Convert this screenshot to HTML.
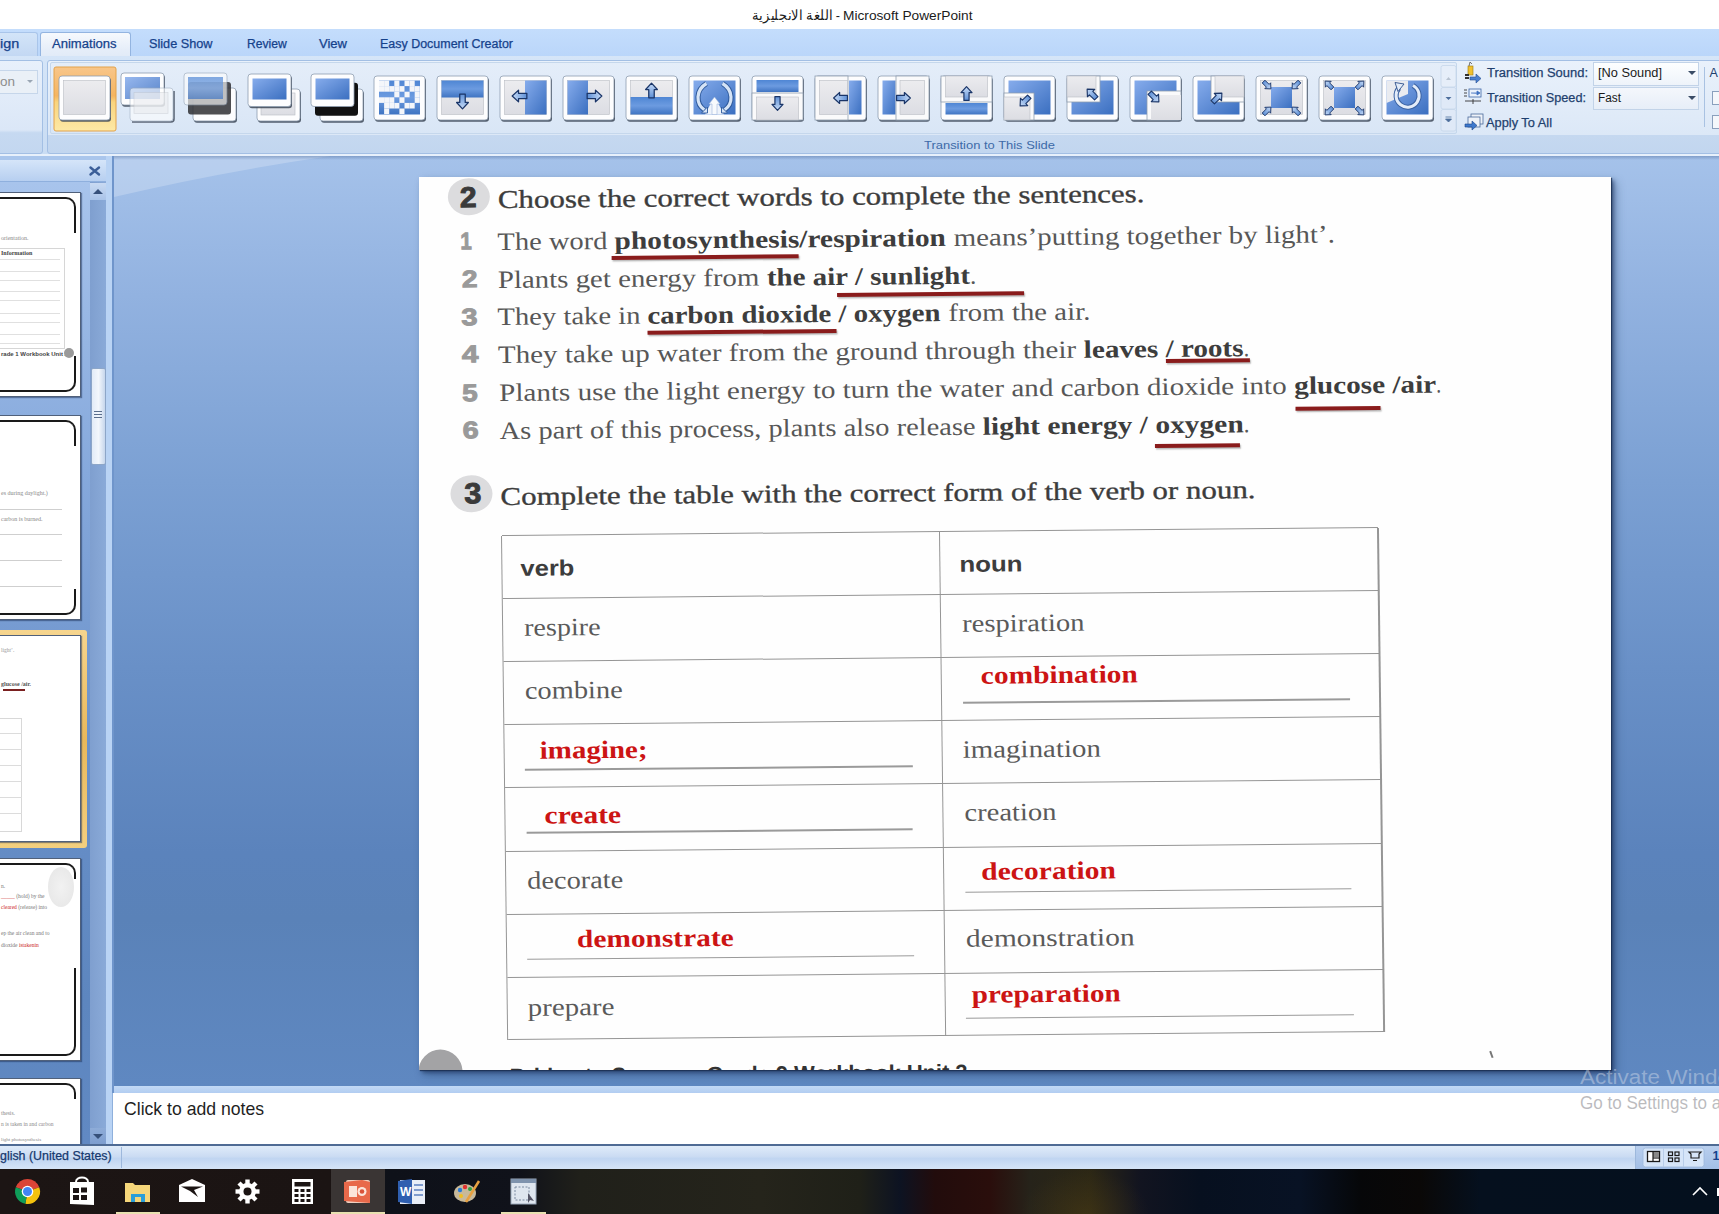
<!DOCTYPE html><html><head><meta charset='utf-8'><style>
*{margin:0;padding:0;box-sizing:border-box}
html,body{width:1719px;height:1214px;overflow:hidden;background:#6f96cc;font-family:"Liberation Sans",sans-serif}
.a{position:absolute}
.t{position:absolute;white-space:pre;line-height:1;transform-origin:0 0}
.b{display:inline-block}
</style></head><body><div class='a' style='left:0;top:0;width:1719px;height:29px;background:#fff'></div><div class='t' style='left:752.0px;top:8.8px;font-family:"Liberation Sans",sans-serif;font-size:13.5px;color:#1b1b1b;font-weight:normal;transform:scaleX(0.9360);'>اللغة الانجليزية -</div><div class='t' style='left:843.3px;top:8.8px;font-family:"Liberation Sans",sans-serif;font-size:13.5px;color:#1b1b1b;font-weight:normal;transform:scaleX(1.0153);'>Microsoft PowerPoint</div><div class='a' style='left:0;top:29px;width:1719px;height:27px;background:linear-gradient(#c4ddfc,#bad6fa)'></div><div class='a' style='left:0;top:55.5px;width:1719px;height:1px;background:#a7c3e8'></div><div class='a' style='left:-10px;top:32px;width:48px;height:24px;border:1px solid #a9c5ea;border-bottom:none;border-radius:3px 3px 0 0;background:linear-gradient(#d3e4f8,#c3d8f3)'></div><div class='t' style='left:0.0px;top:38.3px;font-family:"Liberation Sans",sans-serif;font-size:12.5px;color:#15428b;font-weight:normal;transform:scaleX(1.1506);-webkit-text-stroke:0.25px #15428b'>ign</div><div class='a' style='left:39.5px;top:31.5px;width:91.5px;height:28px;border:1px solid #93b4e0;border-bottom:none;border-radius:3px 3px 0 0;background:linear-gradient(#f6f9fd,#e6eef9 60%,#dfe9f7)'></div><div class='t' style='left:52.4px;top:38.3px;font-family:"Liberation Sans",sans-serif;font-size:12.5px;color:#15428b;font-weight:normal;transform:scaleX(1.0446);-webkit-text-stroke:0.25px #15428b'>Animations</div><div class='t' style='left:149.4px;top:38.3px;font-family:"Liberation Sans",sans-serif;font-size:12.5px;color:#15428b;font-weight:normal;transform:scaleX(1.0152);-webkit-text-stroke:0.25px #15428b'>Slide Show</div><div class='t' style='left:247.1px;top:38.3px;font-family:"Liberation Sans",sans-serif;font-size:12.5px;color:#15428b;font-weight:normal;transform:scaleX(0.9707);-webkit-text-stroke:0.25px #15428b'>Review</div><div class='t' style='left:319.0px;top:38.3px;font-family:"Liberation Sans",sans-serif;font-size:12.5px;color:#15428b;font-weight:normal;transform:scaleX(1.0419);-webkit-text-stroke:0.25px #15428b'>View</div><div class='t' style='left:380.1px;top:38.3px;font-family:"Liberation Sans",sans-serif;font-size:12.5px;color:#15428b;font-weight:normal;transform:scaleX(0.9971);-webkit-text-stroke:0.25px #15428b'>Easy Document Creator</div><div class='a' style='left:0;top:56px;width:1719px;height:100px;background:linear-gradient(#d5e5f8,#c9dcf3)'></div><div class='a' style='left:-10px;top:59.5px;width:52.5px;height:94px;border:1px solid #a3bfe4;border-radius:3px;background:linear-gradient(#e8f0fb,#dbe7f7 75%,#c6d9f1 78%,#c3d7f0)'></div><div class='a' style='left:-5px;top:70px;width:43px;height:24px;border:1px solid #c6d6ea;background:#eaf0f7'></div><div class='t' style='left:0.0px;top:75.9px;font-family:"Liberation Sans",sans-serif;font-size:12.5px;color:#8d8d8d;font-weight:normal;transform:scaleX(1.0787);'>on</div><div class='a' style='left:27px;top:80px;width:0;height:0;border-left:3.5px solid transparent;border-right:3.5px solid transparent;border-top:3.5px solid #9aa6b4'></div><div class='a' style='left:47.4px;top:59.5px;width:1690px;height:94px;border:1px solid #a3bfe4;border-radius:3px;background:linear-gradient(#e9f1fb,#dce8f7 80%,#c5d8f0 80.5%,#c2d6ef)'></div><div class='a' style='left:50px;top:62px;width:1407px;height:72px;border:1px solid #c5d7ec;border-radius:2px;background:linear-gradient(#e4edf9,#d9e6f6)'></div><div class='t' style='left:923.5px;top:139.6px;font-family:"Liberation Sans",sans-serif;font-size:11.5px;color:#3d6aa8;font-weight:normal;transform:scaleX(1.1260);'>Transition to This Slide</div><div class='a' style='left:0;top:153.5px;width:1719px;height:2.5px;background:#e7f0fb'></div><svg class='a' style='left:0;top:0' width='1460' height='140' viewBox='0 0 1460 140'><defs>
<linearGradient id='gblue' x1='0' y1='0' x2='0' y2='1'><stop offset='0' stop-color='#4f86d4'/><stop offset='0.5' stop-color='#6c9be0'/><stop offset='1' stop-color='#3f74c2'/></linearGradient>
<linearGradient id='gblue2' x1='0' y1='0' x2='1' y2='1'><stop offset='0' stop-color='#86acec'/><stop offset='1' stop-color='#3b6fc0'/></linearGradient>
<linearGradient id='ggray' x1='0' y1='0' x2='0' y2='1'><stop offset='0' stop-color='#ececef'/><stop offset='1' stop-color='#dcdde3'/></linearGradient>
<linearGradient id='garr' x1='0' y1='0' x2='0' y2='1'><stop offset='0' stop-color='#c8dcf7'/><stop offset='1' stop-color='#5d8fd6'/></linearGradient>
<linearGradient id='gsel' x1='0' y1='0' x2='0' y2='1'><stop offset='0' stop-color='#f8c68b'/><stop offset='0.45' stop-color='#f5b560'/><stop offset='0.55' stop-color='#f9d47e'/><stop offset='1' stop-color='#fde9a6'/></linearGradient>
</defs><rect x='54' y='67' width='62' height='64' rx='2' fill='url(#gsel)' stroke='#e3a24a' stroke-width='1'/><rect x='60' y='77.8' width='51' height='44' rx='3' fill='#3c4656' opacity='0.85'/><rect x='59' y='76' width='51' height='44' rx='3' fill='#fdfdfe' stroke='#8e9db0' stroke-width='0.8' opacity='1'/><rect x='63.5' y='80.5' width='42' height='34' fill='url(#ggray)' stroke='#b9bcc4' stroke-width='0.6'/><rect x='122' y='74.8' width='43' height='32' rx='3' fill='#3c4656' opacity='0.85'/><rect x='121' y='73' width='43' height='32' rx='3' fill='#fdfdfe' stroke='#8e9db0' stroke-width='0.8' opacity='1'/><rect x='125' y='77' width='35' height='22' fill='url(#gblue2)' opacity='0.85'/><path d='M132,122 L171,122 Q174,122 174,119 L174,91' fill='none' stroke='#3c4656' stroke-width='1.6' opacity='0.8'/><rect x='130' y='88' width='43' height='33' rx='3' fill='#ffffff' opacity='0.62' stroke='#9aa8ba' stroke-width='0.8'/><rect x='134' y='92.5' width='34' height='21' fill='#e8eaee' opacity='0.55' stroke='#b9bcc4' stroke-width='0.6'/><rect x='194' y='89.8' width='43' height='33' rx='3' fill='#3c4656' opacity='0.85'/><rect x='193' y='88' width='43' height='33' rx='3' fill='#fdfdfe' stroke='#8e9db0' stroke-width='0.8' opacity='1'/><rect x='188' y='82' width='43' height='32.5' rx='3' fill='#2f2f33' opacity='0.85'/><rect x='184' y='73' width='43' height='32' rx='3' fill='#fdfdfe' stroke='#8e9db0' stroke-width='0.8' opacity='0.65'/><rect x='188' y='77' width='35' height='22' fill='url(#gblue)' opacity='0.7'/><rect x='258' y='90.8' width='43' height='32' rx='3' fill='#3c4656' opacity='0.85'/><rect x='257' y='89' width='43' height='32' rx='3' fill='#fdfdfe' stroke='#8e9db0' stroke-width='0.8' opacity='1'/><rect x='261' y='93' width='34' height='22' fill='url(#ggray)' stroke='#b9bcc4' stroke-width='0.6'/><rect x='249' y='75.8' width='43' height='32.5' rx='3' fill='#3c4656' opacity='0.85'/><rect x='248' y='74' width='43' height='32.5' rx='3' fill='#fdfdfe' stroke='#8e9db0' stroke-width='0.8' opacity='1'/><rect x='252.5' y='78.5' width='34' height='21' fill='url(#gblue2)'/><rect x='321' y='90.8' width='43' height='32' rx='3' fill='#3c4656' opacity='0.85'/><rect x='320' y='89' width='43' height='32' rx='3' fill='#fdfdfe' stroke='#8e9db0' stroke-width='0.8' opacity='1'/><rect x='315' y='82.7' width='43' height='33' rx='3' fill='#111'/><rect x='311' y='74' width='43' height='32.5' rx='3' fill='#fdfdfe' stroke='#8e9db0' stroke-width='0.8' opacity='1'/><rect x='315.5' y='78.5' width='34' height='21' fill='url(#gblue2)'/><rect x='375' y='77.8' width='51' height='44' rx='3' fill='#3c4656' opacity='0.85'/><rect x='374' y='76' width='51' height='44' rx='3' fill='#fdfdfe' stroke='#8e9db0' stroke-width='0.8' opacity='1'/><rect x='379' y='80.5' width='41' height='34' fill='url(#gblue)'/><rect x='379.0' y='80.5' width='5.1' height='5.6' fill='#f4f6fa'/><rect x='384.1' y='80.5' width='5.1' height='5.6' fill='#f4f6fa'/><rect x='394.3' y='80.5' width='5.1' height='5.6' fill='#f4f6fa'/><rect x='404.5' y='80.5' width='5.1' height='5.6' fill='#f4f6fa'/><rect x='409.6' y='80.5' width='5.1' height='5.6' fill='#f4f6fa'/><rect x='379.0' y='86.1' width='5.1' height='5.6' fill='#f4f6fa'/><rect x='384.1' y='86.1' width='5.1' height='5.6' fill='#f4f6fa'/><rect x='389.2' y='86.1' width='5.1' height='5.6' fill='#f4f6fa'/><rect x='394.3' y='86.1' width='5.1' height='5.6' fill='#f4f6fa'/><rect x='399.4' y='86.1' width='5.1' height='5.6' fill='#f4f6fa'/><rect x='409.6' y='86.1' width='5.1' height='5.6' fill='#f4f6fa'/><rect x='414.7' y='86.1' width='5.1' height='5.6' fill='#f4f6fa'/><rect x='394.3' y='91.7' width='5.1' height='5.6' fill='#f4f6fa'/><rect x='404.5' y='91.7' width='5.1' height='5.6' fill='#f4f6fa'/><rect x='414.7' y='91.7' width='5.1' height='5.6' fill='#f4f6fa'/><rect x='379.0' y='97.3' width='5.1' height='5.6' fill='#f4f6fa'/><rect x='384.1' y='97.3' width='5.1' height='5.6' fill='#f4f6fa'/><rect x='389.2' y='97.3' width='5.1' height='5.6' fill='#f4f6fa'/><rect x='399.4' y='97.3' width='5.1' height='5.6' fill='#f4f6fa'/><rect x='414.7' y='97.3' width='5.1' height='5.6' fill='#f4f6fa'/><rect x='384.1' y='102.9' width='5.1' height='5.6' fill='#f4f6fa'/><rect x='389.2' y='102.9' width='5.1' height='5.6' fill='#f4f6fa'/><rect x='394.3' y='102.9' width='5.1' height='5.6' fill='#f4f6fa'/><rect x='404.5' y='102.9' width='5.1' height='5.6' fill='#f4f6fa'/><rect x='409.6' y='102.9' width='5.1' height='5.6' fill='#f4f6fa'/><rect x='384.1' y='108.5' width='5.1' height='5.6' fill='#f4f6fa'/><rect x='399.4' y='108.5' width='5.1' height='5.6' fill='#f4f6fa'/><rect x='438' y='77.8' width='51' height='44' rx='3' fill='#3c4656' opacity='0.85'/><rect x='437' y='76' width='51' height='44' rx='3' fill='#fdfdfe' stroke='#8e9db0' stroke-width='0.8' opacity='1'/><rect x='441.5' y='80.5' width='42' height='34' fill='url(#ggray)' stroke='#b9bcc4' stroke-width='0.6'/><rect x='441.5' y='80.5' width='42' height='17' fill='url(#gblue)'/><g transform='translate(462.5,101) rotate(180) scale(0.9774999999999999)'><path d='M0,-8 L6,-1.5 L2.8,-1.5 L2.8,7 L-2.8,7 L-2.8,-1.5 L-6,-1.5 Z' fill='url(#garr)' stroke='#1a3568' stroke-width='1.3' stroke-linejoin='round'/></g><rect x='501' y='77.8' width='51' height='44' rx='3' fill='#3c4656' opacity='0.85'/><rect x='500' y='76' width='51' height='44' rx='3' fill='#fdfdfe' stroke='#8e9db0' stroke-width='0.8' opacity='1'/><rect x='504.5' y='80.5' width='42' height='34' fill='url(#ggray)' stroke='#b9bcc4' stroke-width='0.6'/><rect x='525' y='80.5' width='21.5' height='34' fill='url(#gblue2)'/><g transform='translate(520,96) rotate(270) scale(0.9774999999999999)'><path d='M0,-8 L6,-1.5 L2.8,-1.5 L2.8,7 L-2.8,7 L-2.8,-1.5 L-6,-1.5 Z' fill='url(#garr)' stroke='#1a3568' stroke-width='1.3' stroke-linejoin='round'/></g><rect x='564' y='77.8' width='51' height='44' rx='3' fill='#3c4656' opacity='0.85'/><rect x='563' y='76' width='51' height='44' rx='3' fill='#fdfdfe' stroke='#8e9db0' stroke-width='0.8' opacity='1'/><rect x='567.5' y='80.5' width='42' height='34' fill='url(#ggray)' stroke='#b9bcc4' stroke-width='0.6'/><rect x='567.5' y='80.5' width='20.5' height='34' fill='url(#gblue2)'/><g transform='translate(594,96) rotate(90) scale(0.9774999999999999)'><path d='M0,-8 L6,-1.5 L2.8,-1.5 L2.8,7 L-2.8,7 L-2.8,-1.5 L-6,-1.5 Z' fill='url(#garr)' stroke='#1a3568' stroke-width='1.3' stroke-linejoin='round'/></g><rect x='627' y='77.8' width='51' height='44' rx='3' fill='#3c4656' opacity='0.85'/><rect x='626' y='76' width='51' height='44' rx='3' fill='#fdfdfe' stroke='#8e9db0' stroke-width='0.8' opacity='1'/><rect x='630.5' y='80.5' width='42' height='34' fill='url(#ggray)' stroke='#b9bcc4' stroke-width='0.6'/><rect x='630.5' y='97' width='42' height='17.5' fill='url(#gblue)'/><g transform='translate(651.5,91) rotate(0) scale(0.9774999999999999)'><path d='M0,-8 L6,-1.5 L2.8,-1.5 L2.8,7 L-2.8,7 L-2.8,-1.5 L-6,-1.5 Z' fill='url(#garr)' stroke='#1a3568' stroke-width='1.3' stroke-linejoin='round'/></g><rect x='690' y='77.8' width='51' height='44' rx='3' fill='#3c4656' opacity='0.85'/><rect x='689' y='76' width='51' height='44' rx='3' fill='#fdfdfe' stroke='#8e9db0' stroke-width='0.8' opacity='1'/><rect x='693.5' y='80.5' width='42' height='34' fill='url(#gblue2)'/><path d='M718,103 L724,114.5 L705,114.5 L711,103 Z' fill='#eef3fb'/><path d='M706.5,83.5 C695.5,90 695.5,104 704.5,110' fill='none' stroke='#2f5a9c' stroke-width='5.2'/><path d='M706.5,83.5 C695.5,90 695.5,104 704.5,110' fill='none' stroke='#d5e3f6' stroke-width='3.2'/><path d='M701.5,113 L707.5,113 L707.5,107 Z' fill='#d5e3f6' stroke='#2f5a9c' stroke-width='0.9'/><path d='M722.5,83.5 C733.5,90 733.5,104 724.5,110' fill='none' stroke='#2f5a9c' stroke-width='5.2'/><path d='M722.5,83.5 C733.5,90 733.5,104 724.5,110' fill='none' stroke='#d5e3f6' stroke-width='3.2'/><path d='M727.5,113 L721.5,113 L721.5,107 Z' fill='#d5e3f6' stroke='#2f5a9c' stroke-width='0.9'/><path d='M714.5,97 L720,104 L717,104 L717,114.5 L712,114.5 L712,104 L709,104 Z' fill='#f8fafd' stroke='#9db6dc' stroke-width='0.6'/><rect x='753' y='77.8' width='51' height='44' rx='3' fill='#3c4656' opacity='0.85'/><rect x='752' y='76' width='51' height='44' rx='3' fill='#fdfdfe' stroke='#8e9db0' stroke-width='0.8' opacity='1'/><rect x='756.5' y='80' width='42' height='12' fill='url(#gblue)'/><rect x='752' y='93' width='51' height='27' fill='#fafafb' stroke='#8e9db0' stroke-width='0.8'/><rect x='756.5' y='97' width='42' height='23' fill='url(#ggray)' stroke='#b9bcc4' stroke-width='0.6'/><g transform='translate(777.5,103) rotate(180) scale(0.9199999999999999)'><path d='M0,-8 L6,-1.5 L2.8,-1.5 L2.8,7 L-2.8,7 L-2.8,-1.5 L-6,-1.5 Z' fill='url(#garr)' stroke='#1a3568' stroke-width='1.3' stroke-linejoin='round'/></g><rect x='816' y='77.8' width='51' height='44' rx='3' fill='#3c4656' opacity='0.85'/><rect x='815' y='76' width='51' height='44' rx='3' fill='#fdfdfe' stroke='#8e9db0' stroke-width='0.8' opacity='1'/><rect x='849' y='80.5' width='12.5' height='34' fill='url(#gblue2)'/><rect x='815' y='76' width='33' height='44' fill='#fafafb' stroke='#8e9db0' stroke-width='0.8'/><rect x='819.5' y='80.5' width='28' height='34' fill='url(#ggray)' stroke='#b9bcc4' stroke-width='0.6'/><g transform='translate(841,98) rotate(270) scale(0.9199999999999999)'><path d='M0,-8 L6,-1.5 L2.8,-1.5 L2.8,7 L-2.8,7 L-2.8,-1.5 L-6,-1.5 Z' fill='url(#garr)' stroke='#1a3568' stroke-width='1.3' stroke-linejoin='round'/></g><rect x='879' y='77.8' width='51' height='44' rx='3' fill='#3c4656' opacity='0.85'/><rect x='878' y='76' width='51' height='44' rx='3' fill='#fdfdfe' stroke='#8e9db0' stroke-width='0.8' opacity='1'/><rect x='882.5' y='80.5' width='13' height='34' fill='url(#gblue2)'/><rect x='896' y='76' width='33' height='44' fill='#fafafb' stroke='#8e9db0' stroke-width='0.8'/><rect x='900' y='80.5' width='24.5' height='34' fill='url(#ggray)' stroke='#b9bcc4' stroke-width='0.6'/><g transform='translate(903,98) rotate(90) scale(0.9199999999999999)'><path d='M0,-8 L6,-1.5 L2.8,-1.5 L2.8,7 L-2.8,7 L-2.8,-1.5 L-6,-1.5 Z' fill='url(#garr)' stroke='#1a3568' stroke-width='1.3' stroke-linejoin='round'/></g><rect x='942' y='77.8' width='51' height='44' rx='3' fill='#3c4656' opacity='0.85'/><rect x='941' y='76' width='51' height='44' rx='3' fill='#fdfdfe' stroke='#8e9db0' stroke-width='0.8' opacity='1'/><rect x='945.5' y='103' width='42' height='11.5' fill='url(#gblue)'/><rect x='941' y='76' width='51' height='26' fill='#fafafb' stroke='#8e9db0' stroke-width='0.8'/><rect x='945.5' y='76' width='42' height='21' fill='url(#ggray)' stroke='#b9bcc4' stroke-width='0.6'/><g transform='translate(966.5,94) rotate(0) scale(0.9199999999999999)'><path d='M0,-8 L6,-1.5 L2.8,-1.5 L2.8,7 L-2.8,7 L-2.8,-1.5 L-6,-1.5 Z' fill='url(#garr)' stroke='#1a3568' stroke-width='1.3' stroke-linejoin='round'/></g><rect x='1005' y='77.8' width='51' height='44' rx='3' fill='#3c4656' opacity='0.85'/><rect x='1004' y='76' width='51' height='44' rx='3' fill='#fdfdfe' stroke='#8e9db0' stroke-width='0.8' opacity='1'/><rect x='1008.5' y='80.5' width='42' height='34' fill='url(#gblue2)'/><rect x='1004' y='93' width='30' height='27' fill='#fafafb' stroke='#8e9db0' stroke-width='0.8'/><rect x='1004' y='97' width='26' height='23' fill='url(#ggray)' stroke='#b9bcc4' stroke-width='0.6'/><g transform='translate(1025,101) rotate(225) scale(0.8624999999999999)'><path d='M0,-8 L6,-1.5 L2.8,-1.5 L2.8,7 L-2.8,7 L-2.8,-1.5 L-6,-1.5 Z' fill='url(#garr)' stroke='#1a3568' stroke-width='1.3' stroke-linejoin='round'/></g><rect x='1068' y='77.8' width='51' height='44' rx='3' fill='#3c4656' opacity='0.85'/><rect x='1067' y='76' width='51' height='44' rx='3' fill='#fdfdfe' stroke='#8e9db0' stroke-width='0.8' opacity='1'/><rect x='1071.5' y='80.5' width='42' height='34' fill='url(#gblue2)'/><rect x='1067' y='76' width='33' height='26' fill='#fafafb' stroke='#8e9db0' stroke-width='0.8'/><rect x='1067' y='76' width='29' height='21' fill='url(#ggray)' stroke='#b9bcc4' stroke-width='0.6'/><g transform='translate(1092,94) rotate(315) scale(0.8624999999999999)'><path d='M0,-8 L6,-1.5 L2.8,-1.5 L2.8,7 L-2.8,7 L-2.8,-1.5 L-6,-1.5 Z' fill='url(#garr)' stroke='#1a3568' stroke-width='1.3' stroke-linejoin='round'/></g><rect x='1131' y='77.8' width='51' height='44' rx='3' fill='#3c4656' opacity='0.85'/><rect x='1130' y='76' width='51' height='44' rx='3' fill='#fdfdfe' stroke='#8e9db0' stroke-width='0.8' opacity='1'/><rect x='1134.5' y='80.5' width='42' height='34' fill='url(#gblue2)'/><rect x='1147' y='91' width='34' height='29' fill='#fafafb' stroke='#8e9db0' stroke-width='0.8'/><rect x='1151' y='95' width='30' height='25' fill='url(#ggray)'/><g transform='translate(1154,97) rotate(135) scale(0.8624999999999999)'><path d='M0,-8 L6,-1.5 L2.8,-1.5 L2.8,7 L-2.8,7 L-2.8,-1.5 L-6,-1.5 Z' fill='url(#garr)' stroke='#1a3568' stroke-width='1.3' stroke-linejoin='round'/></g><rect x='1194' y='77.8' width='51' height='44' rx='3' fill='#3c4656' opacity='0.85'/><rect x='1193' y='76' width='51' height='44' rx='3' fill='#fdfdfe' stroke='#8e9db0' stroke-width='0.8' opacity='1'/><rect x='1197.5' y='80.5' width='42' height='34' fill='url(#gblue2)'/><rect x='1211' y='76' width='33' height='26' fill='#fafafb' stroke='#8e9db0' stroke-width='0.8'/><rect x='1215' y='76' width='29' height='21' fill='url(#ggray)' stroke='#b9bcc4' stroke-width='0.6'/><g transform='translate(1217,98) rotate(45) scale(0.8624999999999999)'><path d='M0,-8 L6,-1.5 L2.8,-1.5 L2.8,7 L-2.8,7 L-2.8,-1.5 L-6,-1.5 Z' fill='url(#garr)' stroke='#1a3568' stroke-width='1.3' stroke-linejoin='round'/></g><rect x='1257' y='77.8' width='51' height='44' rx='3' fill='#3c4656' opacity='0.85'/><rect x='1256' y='76' width='51' height='44' rx='3' fill='#fdfdfe' stroke='#8e9db0' stroke-width='0.8' opacity='1'/><rect x='1260.5' y='80.5' width='42' height='34' fill='url(#ggray)' stroke='#b9bcc4' stroke-width='0.6'/><rect x='1271' y='87' width='21' height='21' fill='url(#gblue2)'/><g transform='translate(1267,85) rotate(135) scale(0.69)'><path d='M0,-8 L6,-1.5 L2.8,-1.5 L2.8,7 L-2.8,7 L-2.8,-1.5 L-6,-1.5 Z' fill='url(#garr)' stroke='#1a3568' stroke-width='1.3' stroke-linejoin='round'/></g><g transform='translate(1296,85) rotate(225) scale(0.69)'><path d='M0,-8 L6,-1.5 L2.8,-1.5 L2.8,7 L-2.8,7 L-2.8,-1.5 L-6,-1.5 Z' fill='url(#garr)' stroke='#1a3568' stroke-width='1.3' stroke-linejoin='round'/></g><g transform='translate(1267,111) rotate(45) scale(0.69)'><path d='M0,-8 L6,-1.5 L2.8,-1.5 L2.8,7 L-2.8,7 L-2.8,-1.5 L-6,-1.5 Z' fill='url(#garr)' stroke='#1a3568' stroke-width='1.3' stroke-linejoin='round'/></g><g transform='translate(1296,111) rotate(315) scale(0.69)'><path d='M0,-8 L6,-1.5 L2.8,-1.5 L2.8,7 L-2.8,7 L-2.8,-1.5 L-6,-1.5 Z' fill='url(#garr)' stroke='#1a3568' stroke-width='1.3' stroke-linejoin='round'/></g><rect x='1320' y='77.8' width='51' height='44' rx='3' fill='#3c4656' opacity='0.85'/><rect x='1319' y='76' width='51' height='44' rx='3' fill='#fdfdfe' stroke='#8e9db0' stroke-width='0.8' opacity='1'/><rect x='1323.5' y='80.5' width='42' height='34' fill='url(#ggray)' stroke='#b9bcc4' stroke-width='0.6'/><rect x='1334' y='87' width='21' height='21' fill='url(#gblue2)'/><g transform='translate(1329,85) rotate(315) scale(0.69)'><path d='M0,-8 L6,-1.5 L2.8,-1.5 L2.8,7 L-2.8,7 L-2.8,-1.5 L-6,-1.5 Z' fill='url(#garr)' stroke='#1a3568' stroke-width='1.3' stroke-linejoin='round'/></g><g transform='translate(1360,85) rotate(45) scale(0.69)'><path d='M0,-8 L6,-1.5 L2.8,-1.5 L2.8,7 L-2.8,7 L-2.8,-1.5 L-6,-1.5 Z' fill='url(#garr)' stroke='#1a3568' stroke-width='1.3' stroke-linejoin='round'/></g><g transform='translate(1329,111) rotate(225) scale(0.69)'><path d='M0,-8 L6,-1.5 L2.8,-1.5 L2.8,7 L-2.8,7 L-2.8,-1.5 L-6,-1.5 Z' fill='url(#garr)' stroke='#1a3568' stroke-width='1.3' stroke-linejoin='round'/></g><g transform='translate(1360,111) rotate(135) scale(0.69)'><path d='M0,-8 L6,-1.5 L2.8,-1.5 L2.8,7 L-2.8,7 L-2.8,-1.5 L-6,-1.5 Z' fill='url(#garr)' stroke='#1a3568' stroke-width='1.3' stroke-linejoin='round'/></g><rect x='1383' y='77.8' width='51' height='44' rx='3' fill='#3c4656' opacity='0.85'/><rect x='1382' y='76' width='51' height='44' rx='3' fill='#fdfdfe' stroke='#8e9db0' stroke-width='0.8' opacity='1'/><rect x='1386.5' y='80.5' width='42' height='34' fill='url(#gblue2)'/><path d='M1386.5,80.5 L1408,80.5 L1408,94 L1386.5,103 Z' fill='#e9ebf0'/><path d='M1413,85.5 A11.5,11.5 0 1 1 1399,88' fill='none' stroke='#3a62a3' stroke-width='5'/><path d='M1413,85.5 A11.5,11.5 0 1 1 1399,88' fill='none' stroke='#e3ecf9' stroke-width='3'/><path d='M1395,82.5 L1404,84 L1398,91.5 Z' fill='#e3ecf9' stroke='#2c4f8a' stroke-width='0.9'/><rect x='1441' y='65.5' width='15' height='21.5' rx='2' fill='#e6eef9' stroke='#c5d5ea' stroke-width='0.8'/><rect x='1441' y='87.5' width='15' height='21.5' rx='2' fill='#dfe9f7' stroke='#c5d5ea' stroke-width='0.8'/><rect x='1441' y='109.5' width='15' height='21.5' rx='2' fill='#dfe9f7' stroke='#c5d5ea' stroke-width='0.8'/><path d='M1446,80 L1448.5,77 L1451,80 Z' fill='#b8c3d0'/><path d='M1445.5,97 L1448.5,100 L1451.5,97 Z' fill='#4d6e9c'/><path d='M1445.5,117 L1451.5,117 M1445.5,119 L1448.5,122 L1451.5,119 Z' fill='#4d6e9c' stroke='#4d6e9c' stroke-width='0.8'/></svg><svg class='a' style='left:1460px;top:60px' width='60' height='75' viewBox='1460 60 60 75'>
<rect x='1468' y='66' width='5' height='9' fill='#f0c030' stroke='#9a7a10' stroke-width='0.6'/>
<path d='M1469,66 L1470,62 L1472,64' fill='none' stroke='#555' stroke-width='0.8'/>
<rect x='1465' y='74' width='4' height='2' fill='#333'/><rect x='1465' y='77' width='4' height='2' fill='#333'/>
<path d='M1470,77 L1476,77 L1476,74 L1481,78.5 L1476,83 L1476,80 L1470,80 Z' fill='#4a80d0' stroke='#1f4a90' stroke-width='0.6'/>
<rect x='1469' y='89' width='12' height='8' fill='#eaf1fb' stroke='#3c66a8' stroke-width='0.8'/>
<path d='M1471,93 L1477,93 L1477,91 L1480,93 L1477,95 L1477,93.5' fill='#3c70c0' stroke='#3c70c0' stroke-width='0.8'/>
<path d='M1464,90 L1467,90 M1464,93 L1467,93 M1464,96 L1467,96 M1465,101 L1481,101 M1473,99 L1473,104' stroke='#333' stroke-width='0.9'/>
<rect x='1471' y='114' width='12' height='10' fill='#eef2f8' stroke='#4a6a9a' stroke-width='0.8'/>
<rect x='1468' y='117' width='12' height='10' fill='#eef2f8' stroke='#4a6a9a' stroke-width='0.8'/>
<path d='M1465,124 L1472,124 L1472,121 L1477,125.5 L1472,130 L1472,127 L1465,127 Z' fill='#3d78cc' stroke='#1c4488' stroke-width='0.6'/>
</svg><div class='t' style='left:1487.0px;top:67.4px;font-family:"Liberation Sans",sans-serif;font-size:12.5px;color:#1e3f6e;font-weight:normal;transform:scaleX(1.0357);-webkit-text-stroke:0.25px #1e3f6e'>Transition Sound:</div><div class='t' style='left:1487.0px;top:92.4px;font-family:"Liberation Sans",sans-serif;font-size:12.5px;color:#1e3f6e;font-weight:normal;transform:scaleX(1.0152);-webkit-text-stroke:0.25px #1e3f6e'>Transition Speed:</div><div class='t' style='left:1486.0px;top:116.6px;font-family:"Liberation Sans",sans-serif;font-size:12.5px;color:#1e3f6e;font-weight:normal;transform:scaleX(1.0247);-webkit-text-stroke:0.25px #1e3f6e'>Apply To All</div><div class='a' style='left:1593.4px;top:61.6px;width:106px;height:24px;border:1px solid #c2d3e8;background:linear-gradient(#fdfeff,#eef3fa)'></div><div class='a' style='left:1593.4px;top:86.7px;width:106px;height:23px;border:1px solid #c2d3e8;background:linear-gradient(#f4f7fc,#e7eef8)'></div><div class='t' style='left:1598.0px;top:67.4px;font-family:"Liberation Sans",sans-serif;font-size:12.5px;color:#1a1a1a;font-weight:normal;transform:scaleX(1.0232);'>[No Sound]</div><div class='t' style='left:1598.0px;top:92.4px;font-family:"Liberation Sans",sans-serif;font-size:12.5px;color:#1a1a1a;font-weight:normal;transform:scaleX(0.9460);'>Fast</div><div class='a' style='left:1688px;top:71px;width:0;height:0;border-left:4px solid transparent;border-right:4px solid transparent;border-top:4px solid #3b4c66'></div><div class='a' style='left:1688px;top:96px;width:0;height:0;border-left:4px solid transparent;border-right:4px solid transparent;border-top:4px solid #3b4c66'></div><div class='a' style='left:1704px;top:67px;width:1px;height:60px;background:#a9c2e2'></div><div class='t' style='left:1709.6px;top:67.4px;font-family:"Liberation Sans",sans-serif;font-size:12.5px;color:#1e3f6e;font-weight:normal;transform:scaleX(1.0000);'>A</div><div class='a' style='left:1712px;top:90.5px;width:14px;height:14px;border:1px solid #8aa0bd;background:#f4f7fb'></div><div class='a' style='left:1712px;top:115px;width:14px;height:14px;border:1px solid #8aa0bd;background:#f4f7fb'></div><div class='a' style='left:0;top:156px;width:113px;height:989px;background:#aac6ec'></div><div class='a' style='left:0;top:160px;width:106px;height:22px;border-bottom:1px solid #8fb0de;background:linear-gradient(#d5e5f9,#b7cff0)'></div><svg class='a' style='left:88px;top:165px' width='14' height='12' viewBox='0 0 14 12'><path d='M2.5,2.5 L11,9.5 M11,2.5 L2.5,9.5' stroke='#3b5e98' stroke-width='2.4' stroke-linecap='round'/></svg><div class='a' style='left:0;top:182px;width:90px;height:962px;background:linear-gradient(#a8c4ec 0%,#86a9dc 30%,#6990c9 60%,#5d86bf 85%,#6189c3 100%)'></div><div class='a' style='left:90px;top:182px;width:16px;height:962px;background:linear-gradient(90deg,#7f9fcf,#8aaad8)'></div><div class='a' style='left:90px;top:183px;width:16px;height:17px;background:linear-gradient(#c9daf2,#a9c3e8)'></div><div class='a' style='left:93px;top:189px;width:0;height:0;border-left:5px solid transparent;border-right:5px solid transparent;border-bottom:5px solid #36507a'></div><div class='a' style='left:90px;top:1128px;width:16px;height:16px;background:linear-gradient(#8eacd8,#7e9ecf)'></div><div class='a' style='left:93px;top:1134px;width:0;height:0;border-left:5px solid transparent;border-right:5px solid transparent;border-top:5px solid #36507a'></div><div class='a' style='left:90.5px;top:368px;width:15px;height:97px;border:1px solid #8da6c8;border-radius:2px;background:linear-gradient(90deg,#e2ebf7,#f3f7fc 50%,#c6d6ec)'></div><div class='a' style='left:94px;top:411px;width:8px;height:7px;border-top:1px solid #5a6e8c;border-bottom:1px solid #5a6e8c'><div style='margin-top:2px;height:1px;background:#5a6e8c'></div></div><div class='a' style='left:106px;top:156px;width:6px;height:989px;background:#b9d3f4'></div><div class='a' style='left:112px;top:156px;width:1.5px;height:989px;background:#6f95cb'></div><div class='a' style='left:-5px;top:192px;width:86px;height:205px;background:#fff;border:1px solid #50607a;box-shadow:1px 1px 1px rgba(30,50,90,.5);overflow:hidden'><div class='a' style='right:4px;top:4px;width:90px;height:36px;border-right:2px solid #1a1a1a;border-top:2px solid #1a1a1a;border-top-right-radius:10px'></div><div class='a' style='right:4px;bottom:4px;width:90px;height:36px;border-right:2px solid #1a1a1a;border-bottom:2px solid #1a1a1a;border-bottom-right-radius:10px'></div><div class='a' style='left:5px;top:42px;font:6px "Liberation Serif",serif;color:#888;white-space:nowrap;line-height:1'>orientation.</div><div class='a' style='left:-2px;top:55px;width:71px;height:101px;border:1px solid #d6d6d6'></div><div class='a' style='left:5px;top:57px;font:bold 6px "Liberation Serif",serif;color:#444;white-space:nowrap;line-height:1'>Information</div><div class='a' style='left:4px;top:66px;width:60px;height:1px;background:#e0e0e0'></div><div class='a' style='left:4px;top:78px;width:60px;height:1px;background:#e0e0e0'></div><div class='a' style='left:4px;top:87px;width:60px;height:1px;background:#e0e0e0'></div><div class='a' style='left:4px;top:98px;width:60px;height:1px;background:#e0e0e0'></div><div class='a' style='left:4px;top:107px;width:60px;height:1px;background:#e0e0e0'></div><div class='a' style='left:4px;top:120px;width:60px;height:1px;background:#e0e0e0'></div><div class='a' style='left:4px;top:129px;width:60px;height:1px;background:#e0e0e0'></div><div class='a' style='left:4px;top:141px;width:60px;height:1px;background:#e0e0e0'></div><div class='a' style='left:4px;top:150px;width:60px;height:1px;background:#e0e0e0'></div><div class='a' style='left:5px;top:158px;font:bold 6px "Liberation Sans",sans-serif;color:#444;white-space:nowrap;line-height:1'>rade 1 Workbook Unit 2</div><div class='a' style='left:68px;top:155px;width:10px;height:10px;border-radius:50%;background:#9a9a9a'></div></div><div class='a' style='left:-5px;top:415px;width:86px;height:205px;background:#fff;border:1px solid #50607a;box-shadow:1px 1px 1px rgba(30,50,90,.5);overflow:hidden'><div class='a' style='right:4px;top:4px;width:90px;height:26px;border-right:2px solid #1a1a1a;border-top:2px solid #1a1a1a;border-top-right-radius:10px'></div><div class='a' style='right:4px;bottom:4px;width:90px;height:26px;border-right:2px solid #1a1a1a;border-bottom:2px solid #1a1a1a;border-bottom-right-radius:10px'></div><div class='a' style='left:5px;top:74px;font:6px "Liberation Serif",serif;color:#888;white-space:nowrap;line-height:1'>es during daylight.)</div><div class='a' style='left:4px;top:93px;width:62px;height:1px;background:#cfcfcf'></div><div class='a' style='left:5px;top:100px;font:6px "Liberation Serif",serif;color:#888;white-space:nowrap;line-height:1'>carbon is burned.</div><div class='a' style='left:4px;top:118px;width:62px;height:1px;background:#cfcfcf'></div><div class='a' style='left:4px;top:144px;width:62px;height:1px;background:#cfcfcf'></div><div class='a' style='left:4px;top:170px;width:62px;height:1px;background:#cfcfcf'></div></div><div class='a' style='left:-5px;top:630px;width:92px;height:218px;border-radius:3px;background:linear-gradient(#f6d58e,#e9b85a 50%,#f3cf7f);'></div><div class='a' style='left:-5px;top:635px;width:86px;height:207px;background:#fff;border:1px solid #50607a;box-shadow:1px 1px 1px rgba(30,50,90,.5);overflow:hidden'><div class='a' style='left:5px;top:12px;font:5.5px "Liberation Serif",serif;color:#999;white-space:nowrap;line-height:1'>light&#8217;.</div><div class='a' style='left:5px;top:45px;font:bold 6px "Liberation Serif",serif;color:#555;white-space:nowrap;line-height:1'>glucose /air.</div><div class='a' style='left:7px;top:53px;width:22px;height:2px;background:#7a2020'></div><div class='a' style='left:-2px;top:82px;width:28px;height:114px;border:1px solid #d8d8d8'></div><div class='a' style='left:-2px;top:97px;width:28px;height:1px;background:#dcdcdc'></div><div class='a' style='left:-2px;top:113px;width:28px;height:1px;background:#dcdcdc'></div><div class='a' style='left:-2px;top:129px;width:28px;height:1px;background:#dcdcdc'></div><div class='a' style='left:-2px;top:145px;width:28px;height:1px;background:#dcdcdc'></div><div class='a' style='left:-2px;top:161px;width:28px;height:1px;background:#dcdcdc'></div><div class='a' style='left:-2px;top:177px;width:28px;height:1px;background:#dcdcdc'></div></div><div class='a' style='left:-5px;top:858px;width:86px;height:203px;background:#fff;border:1px solid #50607a;box-shadow:1px 1px 1px rgba(30,50,90,.5);overflow:hidden'><div class='a' style='right:4px;top:4px;width:90px;height:16px;border-right:2px solid #1a1a1a;border-top:2px solid #1a1a1a;border-top-right-radius:10px'></div><div class='a' style='right:4px;bottom:4px;width:90px;height:88px;border-right:2px solid #1a1a1a;border-bottom:2px solid #1a1a1a;border-bottom-right-radius:10px'></div><div class='a' style='left:52px;top:8px;width:26px;height:40px;border-radius:50%;background:radial-gradient(#ececec,#dadada);opacity:.7'></div><div class='a' style='left:5px;top:25px;font:5.5px "Liberation Serif",serif;color:#777;white-space:nowrap;line-height:1'>n.</div><div class='a' style='left:5px;top:35px;font:5.5px "Liberation Serif",serif;color:#777;white-space:nowrap;line-height:1'><span style="color:#c22">_____</span> (hold) by the</div><div class='a' style='left:5px;top:46px;font:5.5px "Liberation Serif",serif;color:#777;white-space:nowrap;line-height:1'><span style="color:#c22">cleared</span> (release) into</div><div class='a' style='left:5px;top:72px;font:5.5px "Liberation Serif",serif;color:#777;white-space:nowrap;line-height:1'>ep the air clean and to</div><div class='a' style='left:5px;top:84px;font:5.5px "Liberation Serif",serif;color:#777;white-space:nowrap;line-height:1'>dioxide <span style="color:#c22">istakenin</span></div></div><div class='a' style='left:0;top:1078px;width:90px;height:66px;overflow:hidden'><div class='a' style='left:-5px;top:0px;width:86px;height:230px;background:#fff;border:1px solid #50607a;box-shadow:1px 1px 1px rgba(30,50,90,.5);overflow:hidden'><div class='a' style='right:4px;top:4px;width:90px;height:16px;border-right:2px solid #1a1a1a;border-top:2px solid #1a1a1a;border-top-right-radius:10px'></div><div class='a' style='left:5px;top:32px;font:5.5px "Liberation Serif",serif;color:#888;white-space:nowrap;line-height:1'>thesis.</div><div class='a' style='left:5px;top:43px;font:5.5px "Liberation Serif",serif;color:#888;white-space:nowrap;line-height:1'>n is taken in and carbon</div><div class='a' style='left:5px;top:58px;font:5px "Liberation Serif",serif;color:#888;white-space:nowrap;line-height:1'>light photosynthesis</div></div></div><div class='a' style='left:113.5px;top:156px;width:1606px;height:930px;background:linear-gradient(#a5c2ea 0%,#92b2e0 15%,#7ba0d3 35%,#6990c7 55%,#5b83bc 75%,#5a82b8 82%,#5f88c1 100%)'></div><svg class='a' style='left:113.5px;top:156px' width='400' height='60' viewBox='113.5 156 400 60'><path d='M113.5,156 L330,156 Q220,172 113.5,197 Z' fill='rgba(255,255,255,.22)'/></svg><div class='a' style='left:113.5px;top:156px;width:1606px;height:4px;background:linear-gradient(rgba(60,90,140,.35),rgba(60,90,140,0))'></div><div class='a' style='left:419px;top:177px;width:1192px;height:893px;box-shadow:1px 1px 1px rgba(25,45,80,.8),3px 3px 4px rgba(25,45,85,.55),5px 5px 9px rgba(30,55,95,.35)'></div><div class='a' style='left:419px;top:177px;width:1192px;height:893px;background:#fefefe;overflow:hidden'><div class='a' style='left:-419px;top:-177px;width:1719px;height:1214px;transform-origin:501.5px 535.7px;transform:rotate(-0.52deg) skewX(0.18deg)'><div class='a' style='left:451.7px;top:177.7px;width:42.4px;height:37.6px;border-radius:50%;background:#dcdcde'></div><div class='t' style='left:463.6px;top:182.8px;font-family:"Liberation Sans",sans-serif;font-size:29px;color:#3a3a3a;font-weight:bold;transform:scaleX(1.0347);-webkit-text-stroke:1px #3a3a3a'>2</div><div class='t' style='left:501.7px;top:186.8px;font-family:"Liberation Serif",serif;font-size:25.5px;color:#3c3c3c;font-weight:normal;transform:scaleX(1.2109);-webkit-text-stroke:0.35px #3c3c3c'>Choose the correct words to complete the sentences.</div><div class='t' style='left:501.2px;top:229.0px;font-family:"Liberation Serif",serif;font-size:25px;color:#575757;font-weight:normal;transform:scaleX(1.1387);'>The word </div><div class='t' style='left:618.2px;top:229.0px;font-family:"Liberation Serif",serif;font-size:25px;color:#3d3d3d;font-weight:bold;transform:scaleX(1.1775);'>photosynthesis/respiration</div><div class='t' style='left:949.7px;top:229.0px;font-family:"Liberation Serif",serif;font-size:25px;color:#575757;font-weight:normal;transform:scaleX(1.1585);'> means&#8217;putting together by light&#8217;.</div><div class='t' style='left:500.9px;top:266.5px;font-family:"Liberation Serif",serif;font-size:25px;color:#575757;font-weight:normal;transform:scaleX(1.1536);'>Plants get energy from </div><div class='t' style='left:769.5px;top:266.5px;font-family:"Liberation Serif",serif;font-size:25px;color:#3d3d3d;font-weight:bold;transform:scaleX(1.1587);'>the air / sunlight</div><div class='t' style='left:972.7px;top:266.5px;font-family:"Liberation Serif",serif;font-size:25px;color:#575757;font-weight:normal;transform:scaleX(1.0240);'>.</div><div class='t' style='left:500.1px;top:304.2px;font-family:"Liberation Serif",serif;font-size:25px;color:#575757;font-weight:normal;transform:scaleX(1.1456);'>They take in </div><div class='t' style='left:650.4px;top:304.2px;font-family:"Liberation Serif",serif;font-size:25px;color:#3d3d3d;font-weight:bold;transform:scaleX(1.1566);'>carbon dioxide / oxygen</div><div class='t' style='left:943.6px;top:304.2px;font-family:"Liberation Serif",serif;font-size:25px;color:#575757;font-weight:normal;transform:scaleX(1.1538);'> from the air.</div><div class='t' style='left:500.2px;top:341.7px;font-family:"Liberation Serif",serif;font-size:25px;color:#575757;font-weight:normal;transform:scaleX(1.1635);'>They take up water from the ground through their </div><div class='t' style='left:1085.8px;top:341.7px;font-family:"Liberation Serif",serif;font-size:25px;color:#3d3d3d;font-weight:bold;transform:scaleX(1.1663);'>leaves / roots</div><div class='t' style='left:1245.6px;top:341.7px;font-family:"Liberation Serif",serif;font-size:25px;color:#575757;font-weight:normal;transform:scaleX(0.8800);'>.</div><div class='t' style='left:500.9px;top:380.3px;font-family:"Liberation Serif",serif;font-size:25px;color:#575757;font-weight:normal;transform:scaleX(1.1628);'>Plants use the light energy to turn the water and carbon dioxide into </div><div class='t' style='left:1295.7px;top:380.3px;font-family:"Liberation Serif",serif;font-size:25px;color:#3d3d3d;font-weight:bold;transform:scaleX(1.1686);'>glucose /air</div><div class='t' style='left:1437.7px;top:380.3px;font-family:"Liberation Serif",serif;font-size:25px;color:#575757;font-weight:normal;transform:scaleX(0.8000);'>.</div><div class='t' style='left:501.2px;top:418.1px;font-family:"Liberation Serif",serif;font-size:25px;color:#575757;font-weight:normal;transform:scaleX(1.1386);'>As part of this process, plants also release </div><div class='t' style='left:984.2px;top:418.1px;font-family:"Liberation Serif",serif;font-size:25px;color:#3d3d3d;font-weight:bold;transform:scaleX(1.1782);'>light energy / oxygen</div><div class='t' style='left:1245.2px;top:418.1px;font-family:"Liberation Serif",serif;font-size:25px;color:#575757;font-weight:normal;transform:scaleX(0.9280);'>.</div><div class='t' style='left:464.2px;top:229.3px;font-family:"Liberation Sans",sans-serif;font-size:24px;color:#9a9a9a;font-weight:bold;transform:scaleX(0.8458);-webkit-text-stroke:1px #9a9a9a'>1</div><div class='t' style='left:464.9px;top:266.8px;font-family:"Liberation Sans",sans-serif;font-size:24px;color:#9a9a9a;font-weight:bold;transform:scaleX(1.1677);-webkit-text-stroke:1px #9a9a9a'>2</div><div class='t' style='left:464.2px;top:304.6px;font-family:"Liberation Sans",sans-serif;font-size:24px;color:#9a9a9a;font-weight:bold;transform:scaleX(1.2051);-webkit-text-stroke:1px #9a9a9a'>3</div><div class='t' style='left:463.6px;top:342.0px;font-family:"Liberation Sans",sans-serif;font-size:24px;color:#9a9a9a;font-weight:bold;transform:scaleX(1.2351);-webkit-text-stroke:1px #9a9a9a'>4</div><div class='t' style='left:464.1px;top:380.6px;font-family:"Liberation Sans",sans-serif;font-size:24px;color:#9a9a9a;font-weight:bold;transform:scaleX(1.1602);-webkit-text-stroke:1px #9a9a9a'>5</div><div class='t' style='left:463.7px;top:418.3px;font-family:"Liberation Sans",sans-serif;font-size:24px;color:#9a9a9a;font-weight:bold;transform:scaleX(1.1977);-webkit-text-stroke:1px #9a9a9a'>6</div><div class='a' style='left:615.3px;top:256.7px;width:187.1px;height:4px;background:#8a1c1c;opacity:1;box-shadow:1px 1.5px 1.5px rgba(0,0,0,.28)'></div><div class='a' style='left:839.9px;top:295.5px;width:186.8px;height:4px;background:#8a1c1c;opacity:1;box-shadow:1px 1.5px 1.5px rgba(0,0,0,.28)'></div><div class='a' style='left:650.3px;top:332.1px;width:188.5px;height:4px;background:#8a1c1c;opacity:1;box-shadow:1px 1.5px 1.5px rgba(0,0,0,.28)'></div><div class='a' style='left:1168.1px;top:364.8px;width:83.8px;height:4px;background:#8a1c1c;opacity:1;box-shadow:1px 1.5px 1.5px rgba(0,0,0,.28)'></div><div class='a' style='left:1297.3px;top:413.7px;width:85.0px;height:4px;background:#8a1c1c;opacity:1;box-shadow:1px 1.5px 1.5px rgba(0,0,0,.28)'></div><div class='a' style='left:1155.9px;top:449.7px;width:84.9px;height:4px;background:#8a1c1c;opacity:1;box-shadow:1px 1.5px 1.5px rgba(0,0,0,.28)'></div><div class='a' style='left:450.9px;top:474.5px;width:42px;height:37.4px;border-radius:50%;background:#dcdcde'></div><div class='t' style='left:464.7px;top:479.1px;font-family:"Liberation Sans",sans-serif;font-size:29px;color:#3a3a3a;font-weight:bold;transform:scaleX(1.0532);-webkit-text-stroke:1px #3a3a3a'>3</div><div class='t' style='left:501.4px;top:483.5px;font-family:"Liberation Serif",serif;font-size:25.5px;color:#3c3c3c;font-weight:normal;transform:scaleX(1.2116);-webkit-text-stroke:0.35px #3c3c3c'>Complete the table with the correct form of the verb or noun.</div><div class='a' style='left:501.5px;top:535.1px;width:876.5px;height:1.2px;background:#959595'></div><div class='a' style='left:501.5px;top:597.8px;width:876.5px;height:1.2px;background:#959595'></div><div class='a' style='left:501.5px;top:660.5px;width:876.5px;height:1.2px;background:#959595'></div><div class='a' style='left:501.5px;top:723.5px;width:876.5px;height:1.2px;background:#959595'></div><div class='a' style='left:501.5px;top:786.7px;width:876.5px;height:1.2px;background:#959595'></div><div class='a' style='left:501.5px;top:850.6px;width:876.5px;height:1.2px;background:#959595'></div><div class='a' style='left:501.5px;top:914.0px;width:876.5px;height:1.2px;background:#959595'></div><div class='a' style='left:501.5px;top:977.0px;width:876.5px;height:1.2px;background:#959595'></div><div class='a' style='left:501.5px;top:1039.2px;width:876.5px;height:1.2px;background:#959595'></div><div class='a' style='left:500.9px;top:535.7px;width:1.2px;height:504.1px;background:#959595'></div><div class='a' style='left:938.8px;top:535.7px;width:1.2px;height:504.1px;background:#959595'></div><div class='a' style='left:1377.4px;top:535.7px;width:1.2px;height:504.1px;background:#959595'></div><div class='t' style='left:520.0px;top:557.9px;font-family:"Liberation Sans",sans-serif;font-size:22px;color:#3d3d3d;font-weight:bold;transform:scaleX(1.1617);'>verb</div><div class='t' style='left:959.0px;top:557.8px;font-family:"Liberation Sans",sans-serif;font-size:22px;color:#3d3d3d;font-weight:bold;transform:scaleX(1.1755);'>noun</div><div class='t' style='left:522.8px;top:614.7px;font-family:"Liberation Serif",serif;font-size:25px;color:#5a5a5a;font-weight:normal;transform:scaleX(1.1245);'>respire</div><div class='t' style='left:960.8px;top:614.9px;font-family:"Liberation Serif",serif;font-size:25px;color:#5a5a5a;font-weight:normal;transform:scaleX(1.1438);'>respiration</div><div class='t' style='left:522.6px;top:678.2px;font-family:"Liberation Serif",serif;font-size:25px;color:#5a5a5a;font-weight:normal;transform:scaleX(1.1360);'>combine</div><div class='t' style='left:979.0px;top:667.4px;font-family:"Liberation Serif",serif;font-size:25px;color:#cc1414;font-weight:bold;transform:scaleX(1.1780);'>combination</div><div class='t' style='left:537.1px;top:738.0px;font-family:"Liberation Serif",serif;font-size:25px;color:#cc1414;font-weight:bold;transform:scaleX(1.1596);'>imagine;</div><div class='t' style='left:960.0px;top:741.4px;font-family:"Liberation Serif",serif;font-size:25px;color:#5a5a5a;font-weight:normal;transform:scaleX(1.1572);'>imagination</div><div class='t' style='left:541.4px;top:803.0px;font-family:"Liberation Serif",serif;font-size:25px;color:#cc1414;font-weight:bold;transform:scaleX(1.1843);'>create</div><div class='t' style='left:960.8px;top:803.8px;font-family:"Liberation Serif",serif;font-size:25px;color:#5a5a5a;font-weight:normal;transform:scaleX(1.1426);'>creation</div><div class='t' style='left:523.1px;top:868.2px;font-family:"Liberation Serif",serif;font-size:25px;color:#5a5a5a;font-weight:normal;transform:scaleX(1.1340);'>decorate</div><div class='t' style='left:976.8px;top:863.4px;font-family:"Liberation Serif",serif;font-size:25px;color:#cc1414;font-weight:bold;transform:scaleX(1.1838);'>decoration</div><div class='t' style='left:572.3px;top:926.5px;font-family:"Liberation Serif",serif;font-size:25px;color:#cc1414;font-weight:bold;transform:scaleX(1.1754);'>demonstrate</div><div class='t' style='left:960.6px;top:930.0px;font-family:"Liberation Serif",serif;font-size:25px;color:#5a5a5a;font-weight:normal;transform:scaleX(1.1795);'>demonstration</div><div class='t' style='left:522.1px;top:994.9px;font-family:"Liberation Serif",serif;font-size:25px;color:#5a5a5a;font-weight:normal;transform:scaleX(1.1567);'>prepare</div><div class='t' style='left:965.8px;top:986.3px;font-family:"Liberation Serif",serif;font-size:25px;color:#cc1414;font-weight:bold;transform:scaleX(1.1710);'>preparation</div><div class='a' style='left:522.1px;top:769.1px;width:387.6px;height:1.5px;background:#9a9a9a;opacity:1;'></div><div class='a' style='left:960.7px;top:706.4px;width:387.5px;height:1.5px;background:#9a9a9a;opacity:1;'></div><div class='a' style='left:522.8px;top:832.4px;width:386.6px;height:1.5px;background:#9a9a9a;opacity:1;'></div><div class='a' style='left:960.6px;top:895.7px;width:386.6px;height:1.5px;background:#9a9a9a;opacity:1;'></div><div class='a' style='left:522.1px;top:958.6px;width:386.5px;height:1.5px;background:#9a9a9a;opacity:1;'></div><div class='a' style='left:960.3px;top:1021.9px;width:387.3px;height:1.5px;background:#9a9a9a;opacity:1;'></div><div class='a' style='left:1483.6px;top:1059.9px;width:1.5px;height:7px;background:#777;transform:rotate(-20deg)'></div><div class='a' style='left:412.3px;top:1049.4px;width:44px;height:44px;border-radius:50%;background:#a3a3a5'></div><div class='t' style='left:503.3px;top:1065.9px;font-family:"Liberation Sans",sans-serif;font-size:22px;color:#333;font-weight:bold;transform:scaleX(0.9946);'>Bridge to Success Grade 9 Workbook Unit 3</div></div></div><div class='a' style='left:113.5px;top:1086px;width:1606px;height:7px;background:linear-gradient(#c2d9f6,#b2cdf1)'></div><div class='a' style='left:112.4px;top:1093px;width:1607px;height:51.5px;background:#fff;border-left:1px solid #8fb0dc'></div><div class='t' style='left:124.2px;top:1100.3px;font-family:"Liberation Sans",sans-serif;font-size:18.5px;color:#1f1f1f;font-weight:normal;transform:scaleX(0.9520);'>Click to add notes</div><div class='t' style='left:1580.0px;top:1067.1px;font-family:"Liberation Sans",sans-serif;font-size:20px;color:rgba(215,222,235,.45);font-weight:normal;transform:scaleX(1.1252);'>Activate Windows</div><div class='t' style='left:1579.5px;top:1094.7px;font-family:"Liberation Sans",sans-serif;font-size:17.5px;color:rgba(120,120,125,.5);font-weight:normal;transform:scaleX(0.9738);'>Go to Settings to activate Windows.</div><div class='a' style='left:0;top:1144px;width:1719px;height:1.5px;background:#4f6b94'></div><div class='a' style='left:0;top:1145.5px;width:1719px;height:23.5px;background:linear-gradient(#dfebf9,#cbdcf3 45%,#c0d5f1 55%,#d5e4f7)'></div><div class='t' style='left:0.0px;top:1150.2px;font-family:"Liberation Sans",sans-serif;font-size:12.5px;color:#15386e;font-weight:normal;transform:scaleX(0.9923);-webkit-text-stroke:0.25px #15386e'>glish (United States)</div><div class='a' style='left:121px;top:1147px;width:1px;height:21px;background:#9db8dc'></div><div class='a' style='left:1635px;top:1146px;width:1px;height:23px;background:#9db8dc'></div><div class='a' style='left:1636px;top:1146px;width:83px;height:23px;background:linear-gradient(#b9cfee,#a3bfe6)'></div><svg class='a' style='left:1640px;top:1146px' width='79' height='23' viewBox='1640 1146 79 23'>
<rect x='1643' y='1148' width='61' height='19' rx='2.5' fill='#d6e5f8' stroke='#9cb7dc' stroke-width='0.8'/>
<line x1='1663.5' y1='1148' x2='1663.5' y2='1167' stroke='#b8cde9'/><line x1='1683.5' y1='1148' x2='1683.5' y2='1167' stroke='#b8cde9'/>
<rect x='1647.5' y='1151.5' width='12' height='10' fill='#fff' stroke='#1a1a1a' stroke-width='1.3'/>
<rect x='1653' y='1152' width='6' height='5' fill='#888'/><line x1='1653' y1='1151.5' x2='1653' y2='1161.5' stroke='#1a1a1a' stroke-width='1.2'/><line x1='1653' y1='1158' x2='1659.5' y2='1158' stroke='#1a1a1a' stroke-width='1.2'/>
<rect x='1668.5' y='1152' width='4' height='3.5' fill='none' stroke='#1a1a1a' stroke-width='1.2'/><rect x='1675' y='1152' width='4' height='3.5' fill='none' stroke='#1a1a1a' stroke-width='1.2'/>
<rect x='1668.5' y='1158' width='4' height='3.5' fill='none' stroke='#1a1a1a' stroke-width='1.2'/><rect x='1675' y='1158' width='4' height='3.5' fill='none' stroke='#1a1a1a' stroke-width='1.2'/>
<path d='M1689,1152 L1701,1152 L1699,1154 L1699,1158 L1691,1158 L1691,1154 Z' fill='none' stroke='#1a1a1a' stroke-width='1.2'/>
<line x1='1693' y1='1160.5' x2='1697' y2='1160.5' stroke='#1a1a1a' stroke-width='1'/>
</svg><div class='t' style='left:1712.5px;top:1150.4px;font-family:"Liberation Sans",sans-serif;font-size:12.5px;color:#15428b;font-weight:bold;transform:scaleX(1.0000);'>1</div><div class='a' style='left:0;top:1169px;width:1719px;height:45px;background:linear-gradient(90deg,#1c1514 0px,#1b1413 330px,#0e1119 390px,#10121a 520px,#20201a 580px,#25241b 760px,#1f2018 860px,#0d1322 900px,#220c0c 935px,#2a0e0c 990px,#26231a 1030px,#2c2715 1090px,#121420 1140px,#07101f 1200px,#081224 1300px,#060709 1360px,#0a0807 1420px,#05101e 1480px,#04101e 1719px)'></div><div class='a' style='left:1020px;top:1169px;width:130px;height:45px;background:radial-gradient(ellipse at 50% 100%,rgba(90,70,20,.35),rgba(0,0,0,0) 70%)'></div><div class='a' style='left:330.7px;top:1169px;width:54px;height:45px;background:#3a3534'></div><div class='a' style='left:116px;top:1212px;width:44px;height:2px;background:#e8e0b0'></div><div class='a' style='left:330.7px;top:1212px;width:54.0px;height:2px;background:#e8e0b0'></div><div class='a' style='left:501.4px;top:1212px;width:44.60000000000002px;height:2px;background:#e8e0b0'></div><svg class='a' style='left:0;top:1169px' width='1719' height='45' viewBox='0 1169 1719 45'>
<!-- chrome -->
<path d='M27.5,1191.5 L15.75,1187.22 A12.5,12.5 0 0 1 39.25,1187.22 Z' fill='#db4437'/><path d='M27.5,1191.5 L39.25,1187.22 A12.5,12.5 0 0 1 25.33,1203.81 Z' fill='#f4c20d'/><path d='M27.5,1191.5 L25.33,1203.81 A12.5,12.5 0 0 1 15.75,1187.22 Z' fill='#0f9d58'/>
<circle cx='27.5' cy='1191.5' r='5.8' fill='#fff'/><circle cx='27.5' cy='1191.5' r='4.5' fill='#4285f4'/>
<!-- store -->
<path d='M70,1182 L94,1182 L94,1205 L70,1204 Z' fill='#fff'/>
<path d='M76,1182 C76,1176 88,1176 88,1182' fill='none' stroke='#fff' stroke-width='2'/>
<rect x='73' y='1188' width='6' height='5' fill='#1b1413'/><rect x='81' y='1187.5' width='6' height='5' fill='#1b1413'/>
<rect x='73' y='1195' width='6' height='5' fill='#1b1413'/><rect x='81' y='1195' width='6' height='5' fill='#1b1413'/>
<!-- explorer -->
<path d='M125,1183 L133,1183 L135,1185 L150,1185 L150,1202 L125,1202 Z' fill='#f5d67a'/>
<path d='M131,1202 L131,1194 L145,1194 L145,1202 L141,1202 L141,1197 L135,1197 L135,1202 Z' fill='#2a9ed8'/>
<!-- mail -->
<path d='M179,1185 L192,1179 L205,1185 L205,1202 L179,1202 Z' fill='#fff'/>
<path d='M181,1186.5 L203,1186.5 L194,1190 L198,1197 L190,1191 Z' fill='#1b1413'/>
<!-- settings gear -->
<g transform='translate(247.5,1191.5)'><circle r='8.5' fill='#fff'/>
<g fill='#fff'><rect x='-2.2' y='-12' width='4.4' height='24'/><rect x='-12' y='-2.2' width='24' height='4.4'/><rect x='-2.2' y='-12' width='4.4' height='24' transform='rotate(45)'/><rect x='-2.2' y='-12' width='4.4' height='24' transform='rotate(-45)'/></g>
<circle r='4' fill='#1b1413'/></g>
<!-- calculator -->
<rect x='292' y='1179' width='21' height='25' fill='#fff'/>
<rect x='294.5' y='1182' width='16' height='4.5' fill='#1b1413'/>
<g fill='#1b1413'><rect x='294.5' y='1189' width='4' height='3'/><rect x='300.5' y='1189' width='4' height='3'/><rect x='306.5' y='1189' width='4' height='3'/>
<rect x='294.5' y='1194' width='4' height='3'/><rect x='300.5' y='1194' width='4' height='3'/><rect x='306.5' y='1194' width='4' height='3'/>
<rect x='294.5' y='1199' width='4' height='3'/><rect x='300.5' y='1199' width='4' height='3'/><rect x='306.5' y='1199' width='4' height='3'/></g>
<!-- powerpoint -->
<rect x='346' y='1180' width='24' height='23' rx='2' fill='#f0d0c0'/>
<path d='M344,1182 L362,1180 L370,1182 L370,1203 L344,1201 Z' fill='#e8694a'/>
<rect x='349' y='1186' width='8' height='11' fill='#fbe5da'/><circle cx='362' cy='1191.5' r='4.5' fill='#fbe5da'/><circle cx='362' cy='1191.5' r='2.3' fill='#d9533a'/>
<!-- word -->
<rect x='400' y='1180' width='25' height='24' fill='#e9eef7'/>
<path d='M398,1181 L412,1179 L412,1204 L398,1202 Z' fill='#2f5fb0'/>
<text x='400' y='1196' font-family='Liberation Sans' font-weight='bold' font-size='12' fill='#fff'>W</text>
<line x1='414' y1='1185' x2='423' y2='1185' stroke='#5b7fc0' stroke-width='1.5'/><line x1='414' y1='1190' x2='423' y2='1190' stroke='#5b7fc0' stroke-width='1.5'/><line x1='414' y1='1195' x2='423' y2='1195' stroke='#5b7fc0' stroke-width='1.5'/>
<!-- paint -->
<ellipse cx='465' cy='1193' rx='11' ry='9' fill='#c8b99a'/>
<circle cx='460' cy='1190' r='2.2' fill='#2a7bd8'/><circle cx='465' cy='1187' r='2.2' fill='#e03030'/><circle cx='470' cy='1189' r='2' fill='#30a040'/><circle cx='461' cy='1196' r='2' fill='#f0c020'/>
<path d='M466,1202 L479,1181' stroke='#e7a040' stroke-width='2.5'/>
<!-- snipping/other -->
<rect x='511' y='1179' width='25' height='25' fill='#dfe6ef' stroke='#9aa8ba' stroke-width='1'/>
<rect x='511' y='1179' width='25' height='4' fill='#7f93ad'/>
<rect x='515' y='1187' width='14' height='13' fill='none' stroke='#7a8aa0' stroke-dasharray='2,1.5'/>
<path d='M528,1193 L534,1201 L530,1200 L528,1203 Z' fill='#556'/>
<!-- chevron -->
<path d='M1693,1195 L1700,1188 L1707,1195' fill='none' stroke='#fff' stroke-width='1.6'/>
<rect x='1717' y='1188' width='2' height='8' fill='#fff'/>
</svg></body></html>
